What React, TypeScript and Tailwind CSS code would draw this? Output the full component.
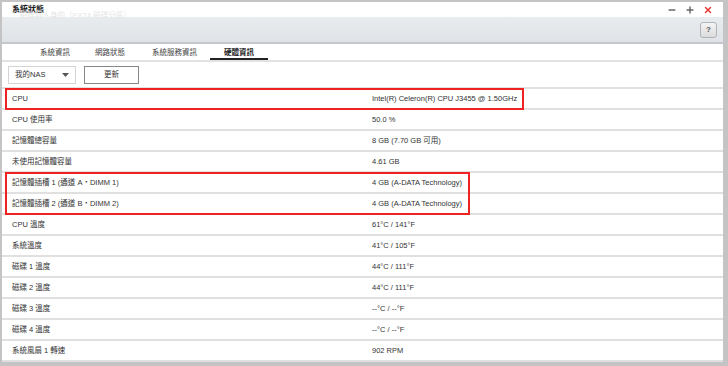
import { Minus, Plus, X } from "lucide-react";

const ROWS: [string, string][] = [
  ["CPU", "Intel(R) Celeron(R) CPU J3455 @ 1.50GHz"],
  ["CPU 使用率", "50.0 %"],
  ["記憶體總容量", "8 GB (7.70 GB 可用)"],
  ["未使用記憶體容量", "4.61 GB"],
  ["記憶體插槽 1 (通道 A・DIMM 1)", "4 GB (A-DATA Technology)"],
  ["記憶體插槽 2 (通道 B・DIMM 2)", "4 GB (A-DATA Technology)"],
  ["CPU 溫度", "61°C / 141°F"],
  ["系統溫度", "41°C / 105°F"],
  ["磁碟 1 溫度", "44°C / 111°F"],
  ["磁碟 2 溫度", "44°C / 111°F"],
  ["磁碟 3 溫度", "--°C / --°F"],
  ["磁碟 4 溫度", "--°C / --°F"],
  ["系統風扇 1 轉速", "902 RPM"],
];

const font = { fontFamily: '"Liberation Sans", "Noto Sans CJK TC", sans-serif' };

export default function App() {
  return (
    <div className="h-[366px] w-[728px] overflow-hidden bg-[#c4c4c4] pl-[2px] pt-[2px]" style={font}>
      <div className="flex h-[360px] w-[721px] flex-col bg-white">
        {/* Title bar */}
        <div className="relative flex h-[15px] shrink-0 items-center bg-white px-[10px]">
          <span className="relative z-10 text-[8px] font-bold text-[#222]">系統狀態</span>
          <span className="absolute left-[18px] top-[8px] z-10 text-[7.5px] text-[#e6e6e6]">磁碟容人身的（EXT4 磁碟分區）</span>
          <div className="ml-auto flex items-center gap-[8px] pr-[-2px]">
            <Minus size={10} strokeWidth={3.5} className="text-[#666]" />
            <Plus size={10} strokeWidth={3.5} className="text-[#666]" />
            <X size={10} strokeWidth={3.5} className="text-[#e53935]" />
          </div>
        </div>

        {/* Toolbar */}
        <div className="flex h-[27px] shrink-0 items-center justify-end border-b-2 border-[#c4c8cc] bg-gradient-to-b from-[#e9ecef] to-[#dfe3e7] pr-[6px]">
          <div className="flex h-[16px] w-[17px] items-center justify-center rounded-[3px] border border-[#b0b4b8] bg-gradient-to-b from-[#f4f4f4] to-[#dcdcdc] text-[8px] font-bold text-[#555]">
            ?
          </div>
        </div>

        {/* Tabs */}
        <div className="flex h-[18px] shrink-0 items-end border-b-2 border-[#e2e2e2] pl-[38px] text-[7.5px] text-[#444]">
          <div className="mr-[25px] pb-[2px]">系統資訊</div>
          <div className="mr-[27px] pb-[2px]">網路狀態</div>
          <div className="mr-[13px] pb-[2px]">系統服務資訊</div>
          <div className="border-b-2 border-[#222] px-[14px] font-bold text-[#222]">硬體資訊</div>
        </div>

        {/* Controls */}
        <div className="flex h-[27px] shrink-0 items-center gap-[8px] border-b-2 border-[#e2e2e2] pl-[6px]">
          <div className="flex h-[18px] w-[68px] items-center justify-between border border-[#d4d4d4] bg-white px-[6px] text-[7.5px] text-[#333]">
            我的NAS
            <svg width="7" height="4" viewBox="0 0 7 4">
              <path d="M0 0h7L3.5 4z" fill="#555" />
            </svg>
          </div>
          <div className="flex h-[18px] w-[55px] items-center justify-center border border-[#888] bg-white text-[7.5px] text-[#333]">
            更新
          </div>
        </div>

        {/* Table */}
        <div className="relative flex-1">
          {ROWS.map(([k, v]) => (
            <div key={k} className="flex h-[21px] items-center border-b-2 border-[#e0e0e0] text-[7.5px] text-[#333]">
              <div className="w-[370px] pl-[10px]">{k}</div>
              <div>{v}</div>
            </div>
          ))}
          <div className="pointer-events-none absolute left-[3px] top-[-1px] h-[22px] w-[519px] border-2 border-[#ee2222]" />
          <div className="pointer-events-none absolute left-[3px] top-[83px] h-[43px] w-[465px] border-2 border-[#ee2222]" />
        </div>
      </div>
    </div>
  );
}
